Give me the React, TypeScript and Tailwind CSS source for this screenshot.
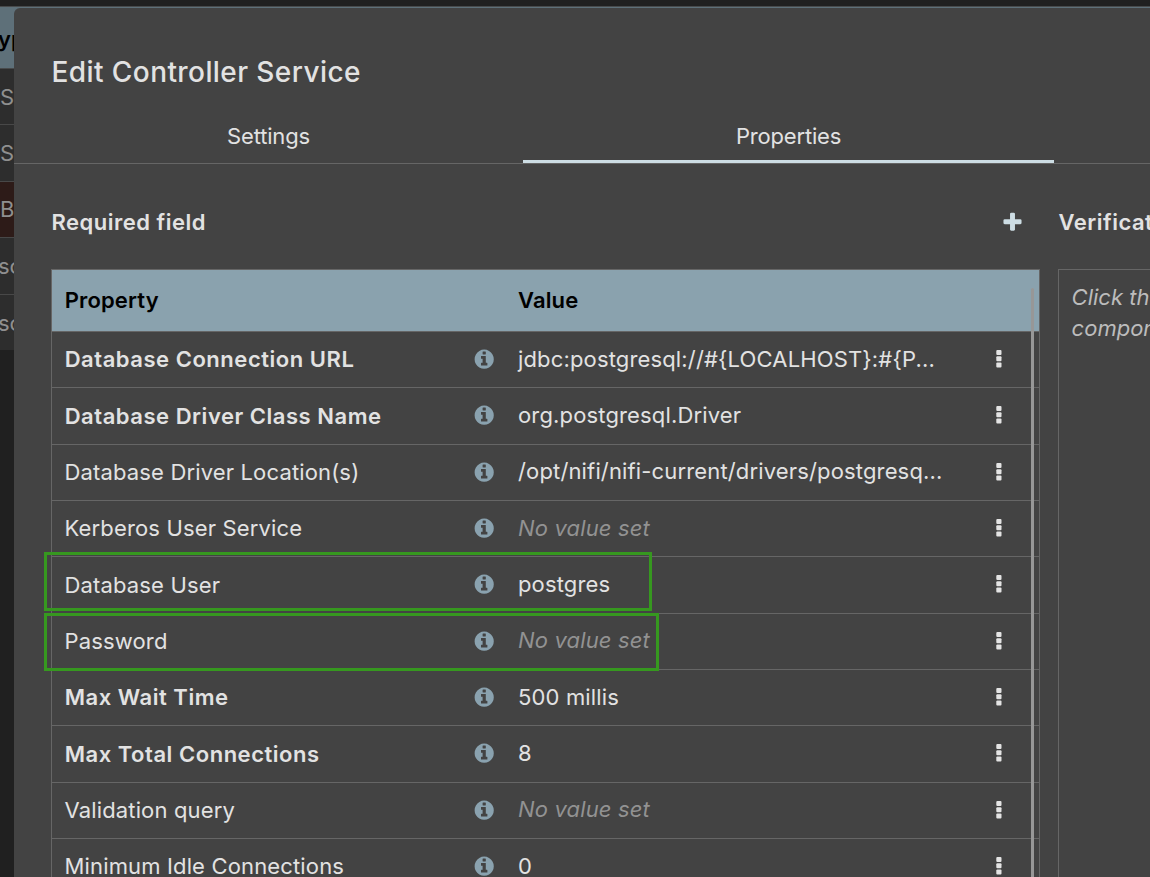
import React from 'react';

type Row = { name: string; value?: string; required?: boolean };

const rows: Row[] = [
  { name: 'Database Connection URL', value: 'jdbc:postgresql://#{LOCALHOST}:#{P...', required: true },
  { name: 'Database Driver Class Name', value: 'org.postgresql.Driver', required: true },
  { name: 'Database Driver Location(s)', value: '/opt/nifi/nifi-current/drivers/postgresq...' },
  { name: 'Kerberos User Service' },
  { name: 'Database User', value: 'postgres' },
  { name: 'Password' },
  { name: 'Max Wait Time', value: '500 millis', required: true },
  { name: 'Max Total Connections', value: '8', required: true },
  { name: 'Validation query' },
  { name: 'Minimum Idle Connections', value: '0' },
];

function InfoIcon() {
  return (
    <svg viewBox="0 0 1792 1792" className="block size-[22.4px] fill-[#8aa2af]">
      <path d="M1152 1376v-160q0-14-9-23t-23-9h-96v-512q0-14-9-23t-23-9h-320q-14 0-23 9t-9 23v160q0 14 9 23t23 9h96v320h-96q-14 0-23 9t-9 23v160q0 14 9 23t23 9h448q14 0 23-9t9-23zm-128-896v-160q0-14-9-23t-23-9h-192q-14 0-23 9t-9 23v160q0 14 9 23t23 9h192q14 0 23-9t9-23zm640 416q0 209-103 385.5t-279.5 279.5-385.5 103-385.5-103-279.5-279.5-103-385.5 103-385.5 279.5-279.5 385.5-103 385.5 103 279.5 279.5 103 385.5z" />
    </svg>
  );
}

function PlusIcon() {
  return (
    <svg viewBox="0 0 1792 1792" className="block size-[23px] fill-[#cddde4]">
      <path d="M1600 736v192q0 40-28 68t-68 28h-416v416q0 40-28 68t-68 28h-192q-40 0-68-28t-28-68v-416h-416q-40 0-68-28t-28-68v-192q0-40 28-68t68-28h416v-416q0-40 28-68t68-28h192q40 0 68 28t28 68v416h416q40 0 68 28t28 68z" />
    </svg>
  );
}

function MoreIcon() {
  return (
    <svg viewBox="0 0 6 18" className="mb-[1.2px] block h-[18px] w-[6px] fill-[#e4e4e4]">
      <rect x="0.3" y="0" width="5.2" height="5" rx="1" />
      <rect x="0.3" y="6.3" width="5.2" height="5" rx="1" />
      <rect x="0.3" y="12.6" width="5.2" height="5" rx="1" />
    </svg>
  );
}

function Backdrop() {
  return (
    <div className="w-[14px] shrink-0 overflow-hidden whitespace-nowrap text-[22px] leading-none text-[#8f8f8f]">
      <div className="flex h-[62px] items-center border-b border-[#484a4b] bg-[#5e7079] pt-[2px]">
        <span className="-ml-[2px] font-semibold text-black">ype</span>
      </div>
      <div className="flex h-[56px] items-center border-b border-[#484848] bg-[#2d2d2d]">S</div>
      <div className="flex h-[57px] items-center border-b border-[#484848] bg-[#2d2d2d]">S</div>
      <div className="flex h-[56px] items-center border-b border-[#484848] bg-[#2d1b18] pb-px">B</div>
      <div className="flex h-[57px] items-center border-b border-[#484848] bg-[#2d2d2d]">
        <span className="-ml-[2px]">sc</span>
      </div>
      <div className="flex h-[55px] items-center bg-[#2d2d2d]">
        <span className="-ml-[2px]">sc</span>
      </div>
    </div>
  );
}

function PropertyTable() {
  return (
    <div className="relative h-[700px] w-[989px] overflow-hidden border border-[#666666]">
      <div className="flex h-[62px] items-center border-b border-[#666666] bg-[#8aa2ae] text-[22px] font-semibold tracking-[0.15px] text-black">
        <span className="w-[466px] pl-[12.7px]">Property</span>
        <span>Value</span>
      </div>
      {rows.map((row) => (
        <div key={row.name} className="flex h-[56.34px] items-center border-b border-[#666666] text-[22px] leading-[28px]">
          <span className={row.required ? 'w-[421px] pb-[0.4px] pl-[12.7px] font-semibold tracking-[0.53px]' : 'w-[421px] pb-[0.4px] pl-[12.5px] tracking-[0.15px]'}>
            {row.name}
          </span>
          <span className="w-[45px] pb-px">
            <InfoIcon />
          </span>
          <span className={row.value ? 'w-[478px] pb-[1.7px] tracking-[0.15px]' : 'w-[478px] pb-[1.7px] italic tracking-[0.15px] text-[#929292]'}>
            {row.value ?? 'No value set'}
          </span>
          <MoreIcon />
        </div>
      ))}
      <div className="absolute top-[18px] right-[5px] h-[700px] w-[3px] rounded-t bg-[#979797]" />
    </div>
  );
}

export default function App() {
  return (
    <div className="relative flex h-[877px] w-[1150px] flex-col overflow-hidden bg-[#202020] font-['Inter',sans-serif] text-[#e2e2e2]">
      <div className="h-[7px] shrink-0 border-b border-[#484a4b]" />
      <div className="flex grow bg-[#202020]">
        <Backdrop />
        <div className="relative flex w-[1136px] flex-col bg-[#5e7079]">
          <div className="mt-px flex h-[869px] flex-col rounded-tl-[6px] bg-[#434343]">
            <h1 className="h-[107px] shrink-0 pt-[44px] pl-[37.5px] text-[28px] leading-[40px] font-medium tracking-[0.42px]">Edit Controller Service</h1>
            <div className="flex h-[49px] shrink-0 border-b border-[#666666] text-[22px] leading-[42px] tracking-[-0.18px]">
              <div className="w-[509px] text-center">Settings</div>
              <div className="h-[48px] w-[531px] border-b-[3px] border-[#cddde4] text-center">Properties</div>
            </div>
            <div className="flex w-[1136px] gap-[18px] overflow-hidden pl-[37px]">
              <section className="w-[989px] shrink-0">
                <div className="flex h-[105px] items-center justify-between pt-[12px] pr-[16px]">
                  <h2 className="pl-[0.5px] text-[22px] font-semibold tracking-[0.5px]">Required field</h2>
                  <PlusIcon />
                </div>
                <PropertyTable />
              </section>
              <section className="w-[300px] shrink-0">
                <div className="flex h-[105px] items-center pt-[12px]">
                  <h2 className="pl-[0.5px] text-[22px] font-semibold tracking-[0.5px]">Verification</h2>
                </div>
                <div className="h-[700px] border border-[#666666] px-[12.6px] pt-[12px] text-[22px] leading-[31px] whitespace-nowrap text-[#bcbcbc] italic">
                  <p>Click the</p>
                  <p>component</p>
                </div>
              </section>
            </div>
          </div>
        </div>
      </div>
      <div className="absolute top-[552px] left-[44px] h-[59px] w-[608px] border-[3px] border-[#36981f]" />
      <div className="absolute top-[613px] left-[44px] h-[58px] w-[615px] border-[3px] border-[#36981f]" />
    </div>
  );
}
